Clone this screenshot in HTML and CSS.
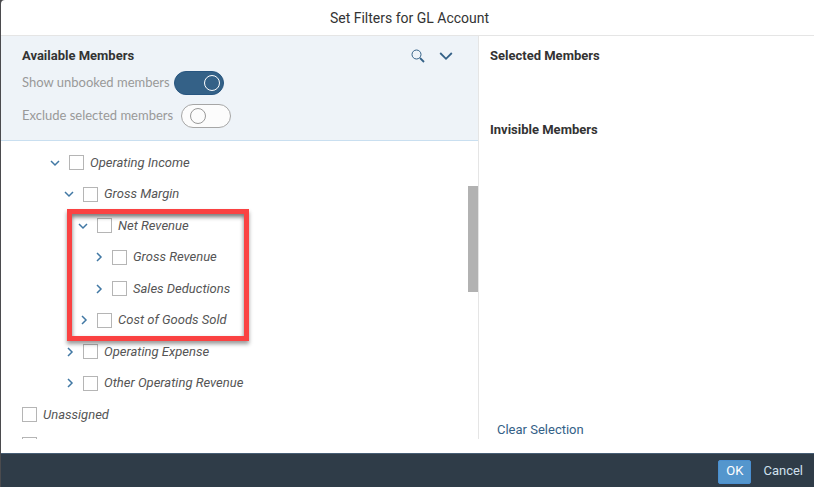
FILE: index.html
```html
<!DOCTYPE html>
<html lang="en">
<head>
<meta charset="utf-8">
<title>Set Filters for GL Account</title>
<link rel="stylesheet" href="styles.css">
</head>
<body>
<main class="dialog" role="dialog" aria-labelledby="dialog-title">
  <h1 class="title" id="dialog-title">Set Filters for GL Account</h1>
  <div class="content">
    <section class="available">
      <div class="options">
        <div class="heading-row">
          <h2 class="heading">Available Members</h2>
          <button class="icon-button" type="button" aria-label="Search">
            <svg width="14" height="14" viewBox="0 0 14 14"><circle cx="5.500" cy="5.500" r="4.500" fill="none" stroke="#346187" stroke-width="1"/><path d="M9 9l4 4" stroke="#346187" stroke-width="1.800"/></svg>
          </button>
          <button class="icon-button" type="button" aria-label="More options">
            <svg width="14" height="14" viewBox="0 0 14 14"><path d="M1.200 4l5.800 5.800L12.800 4" fill="none" stroke="#346187" stroke-width="1.800"/></svg>
          </button>
        </div>
        <label class="option"><span>Show unbooked members</span><input class="switch" type="checkbox" role="switch" checked></label>
        <label class="option option-wide"><span>Exclude selected members</span><input class="switch" type="checkbox" role="switch"></label>
      </div>
      <div class="tree-area">
        <ul class="tree">
          <li class="node level-2"><button class="toggle open" type="button" aria-label="Collapse"><svg width="10" height="10" viewBox="0 0 10 10"><path d="M3 1l4 4-4 4"/></svg></button><label><input type="checkbox">Operating Income</label></li>
          <li class="node level-3"><button class="toggle open" type="button" aria-label="Collapse"><svg width="10" height="10" viewBox="0 0 10 10"><path d="M3 1l4 4-4 4"/></svg></button><label><input type="checkbox">Gross Margin</label></li>
          <li class="node level-4"><button class="toggle open" type="button" aria-label="Collapse"><svg width="10" height="10" viewBox="0 0 10 10"><path d="M3 1l4 4-4 4"/></svg></button><label><input type="checkbox">Net Revenue</label></li>
          <li class="node level-5"><button class="toggle" type="button" aria-label="Expand"><svg width="10" height="10" viewBox="0 0 10 10"><path d="M3 1l4 4-4 4"/></svg></button><label><input type="checkbox">Gross Revenue</label></li>
          <li class="node level-5"><button class="toggle" type="button" aria-label="Expand"><svg width="10" height="10" viewBox="0 0 10 10"><path d="M3 1l4 4-4 4"/></svg></button><label><input type="checkbox">Sales Deductions</label></li>
          <li class="node level-4"><button class="toggle" type="button" aria-label="Expand"><svg width="10" height="10" viewBox="0 0 10 10"><path d="M3 1l4 4-4 4"/></svg></button><label><input type="checkbox">Cost of Goods Sold</label></li>
          <li class="node level-3"><button class="toggle" type="button" aria-label="Expand"><svg width="10" height="10" viewBox="0 0 10 10"><path d="M3 1l4 4-4 4"/></svg></button><label><input type="checkbox">Operating Expense</label></li>
          <li class="node level-3"><button class="toggle" type="button" aria-label="Expand"><svg width="10" height="10" viewBox="0 0 10 10"><path d="M3 1l4 4-4 4"/></svg></button><label><input type="checkbox">Other Operating Revenue</label></li>
          <li class="node level-1"><label><input type="checkbox">Unassigned</label></li>
          <li class="node level-1"><input type="checkbox" aria-label="Next member"></li>
        </ul>
        <div class="highlight"></div>
        <div class="scroll-thumb"></div>
      </div>
    </section>
    <section class="selected">
      <div class="group"><h2 class="heading">Selected Members</h2></div>
      <div class="group"><h2 class="heading">Invisible Members</h2></div>
      <a class="clear" href="#">Clear Selection</a>
    </section>
  </div>
  <footer class="footer">
    <button class="button primary" type="button">OK</button>
    <button class="button" type="button">Cancel</button>
  </footer>
</main>
</body>
</html>
```
FILE: styles.css
```css
* {
  box-sizing: border-box;
}

body {
  margin: 0;
  background: #4b4b4e;
  color: #333;
  font: 13px/20px Roboto, "Liberation Sans", sans-serif;
}

button,
input {
  margin: 0;
  font: inherit;
}

.dialog {
  display: flex;
  flex-direction: column;
  height: 100vh;
  margin-left: 1px;
  border-radius: 4px 0 0 0;
  background: #fff;
  overflow: hidden;
}

.title {
  margin: 0;
  padding: 8px 4px 7px 8px;
  border-bottom: 1px solid #e5e5e5;
  font-size: 14px;
  font-weight: 400;
  text-align: center;
}

.content {
  display: grid;
  flex: 1;
  grid-template-columns: 478fr 335fr;
  min-height: 0;
  margin-bottom: 14px;
}

.available {
  display: flex;
  flex-direction: column;
  min-height: 0;
  border-right: 1px solid #e5e5e5;
}

.options {
  height: 105px;
  padding: 10px 18px 0 21px;
  border-bottom: 1px solid #c9dff0;
  background: #eef3f8;
}

.heading-row {
  display: flex;
  align-items: center;
}

.heading {
  flex: 1;
  margin: 0;
  font-size: 13px;
  font-weight: 700;
}

.icon-button {
  width: 28px;
  height: 20px;
  padding: 3px 7px;
  border: 0;
  background: none;
}

.icon-button svg,
.toggle svg {
  display: block;
}

.option {
  display: flex;
  align-items: center;
  gap: 4px;
  height: 33px;
  color: #999;
  font-family: Lato, Roboto, sans-serif;
}

.option span {
  padding-bottom: 2px;
}

.option-wide {
  gap: 8px;
}

.switch {
  display: flex;
  align-items: center;
  width: 50px;
  height: 24px;
  padding: 0 8px;
  border: 1px solid #a6a6a6;
  border-radius: 12px;
  appearance: none;
  background: #fcfcfc;
}

.switch::before {
  width: 14px;
  height: 14px;
  border: 1px solid #999;
  border-radius: 50%;
  content: "";
}

.switch:checked {
  justify-content: flex-end;
  padding: 0 3px;
  border-color: #285680;
  background: #346187;
}

.switch:checked::before {
  border-color: #fff;
}

.tree-area {
  position: relative;
  flex: 1;
  min-height: 0;
  overflow: hidden;
}

.tree {
  margin: 0;
  padding: 6px 0 0 21px;
  list-style: none;
}

.node {
  display: flex;
  align-items: center;
  height: 31px;
  color: #555;
  font-style: italic;
}

.node:nth-child(even) {
  height: 32px;
}

.node:last-child {
  height: 29px;
}

.node label {
  display: flex;
  align-items: center;
  gap: 6px;
}

.node input {
  width: 15px;
  height: 15px;
  border: 1px solid #b5b5b5;
  appearance: none;
  background: #fff;
}

.level-2 {
  padding-left: 27px;
}

.level-3 {
  padding-left: 41px;
}

.level-4 {
  padding-left: 55px;
}

.level-5 {
  padding-left: 70px;
}

.toggle {
  width: 20px;
  height: 20px;
  padding: 5px 8px 5px 2px;
  border: 0;
  background: none;
}

.toggle path {
  fill: none;
  stroke: #4178a4;
  stroke-width: 1.5;
}

.toggle.open {
  padding: 5px 9px 5px 1px;
}

.toggle.open svg {
  transform: rotate(90deg);
}

.highlight {
  position: absolute;
  top: 68px;
  left: 66px;
  width: 182px;
  height: 132px;
  border: 5px solid #fa4242;
  box-shadow: 0 3px 4px #0006, inset 0 3px 4px #0008;
  pointer-events: none;
}

.scroll-thumb {
  position: absolute;
  top: 45px;
  right: 0;
  width: 10px;
  height: 106px;
  background: #b2b2b2;
}

.selected {
  display: flex;
  flex-direction: column;
  padding: 10px 11px 0;
}

.group {
  min-height: 74px;
}

.clear {
  align-self: flex-start;
  margin: auto 0 -1px 7px;
  color: #346187;
  text-decoration: none;
}

.footer {
  display: flex;
  justify-content: flex-end;
  gap: 3px;
  height: 34px;
  padding: 6px 2px 4px;
  border-top: 1px solid #475e75;
  background: #2f3c48;
}

.button {
  height: 24px;
  padding: 0 8px 2px;
  border: 1px solid transparent;
  border-radius: 2px;
  background: none;
  color: #d1e0ee;
}

.primary {
  padding: 0 7px 2px;
  border-color: #4a8fd0;
  background: #5496cd;
  color: #fff;
}
```
